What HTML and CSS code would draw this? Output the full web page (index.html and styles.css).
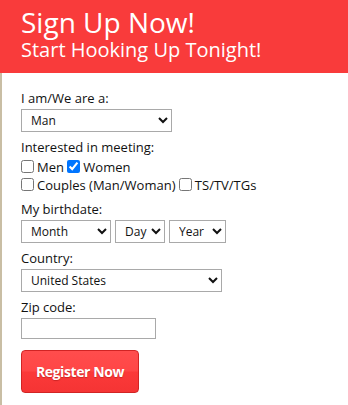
FILE: index.html
```html
<!DOCTYPE html>
<html>
<head>
<meta charset="utf-8">
<link rel="stylesheet" href="styles.css">
</head>
<body>
<header class="hero">
  <h1 class="hero-title">Sign Up Now!</h1>
  <h2 class="hero-sub">Start Hooking Up Tonight!</h2>
</header>
<form class="signup">
  <div class="field">
    <label class="field-label">I am/We are a:</label>
    <select class="sel sel-gender"><option>Man</option></select>
  </div>
  <div class="field">
    <label class="field-label">Interested in meeting:</label>
    <div class="check-row"><label><input type="checkbox" class="chk">Men</label> <label><input type="checkbox" class="chk" checked>Women</label></div>
    <div class="check-row"><label><input type="checkbox" class="chk">Couples (Man/Woman)</label> <label><input type="checkbox" class="chk">TS/TV/TGs</label></div>
  </div>
  <div class="field">
    <label class="field-label">My birthdate:</label>
    <div class="date-row">
      <select class="sel sel-month"><option>Month</option></select>
      <select class="sel sel-day"><option>Day</option></select>
      <select class="sel sel-year"><option>Year</option></select>
    </div>
  </div>
  <div class="field">
    <label class="field-label">Country:</label>
    <select class="sel sel-country"><option>United States</option></select>
  </div>
  <div class="field">
    <label class="field-label">Zip code:</label>
    <input type="text" class="zip">
  </div>
  <button type="button" class="register">Register Now</button>
</form>
</body>
</html>
```
FILE: styles.css
```css
html, body {
  margin: 0;
  padding: 0;
  background: #fff;
}
body {
  font-family: "Open Sans", "Noto Sans", sans-serif;
  color: #111;
  width: 348px;
  height: 405px;
  overflow: hidden;
}
.hero {
  background: #f93b3b;
  color: #fff;
  height: 73px;
  padding-left: 21px;
  box-sizing: border-box;
}
.hero-title {
  margin: 0;
  padding-top: 7px;
  font-size: 28px;
  line-height: 30px;
  font-weight: 400;
}
.hero-sub {
  margin: 0;
  font-size: 20px;
  line-height: 26px;
  font-weight: 400;
}
.signup {
  border-left: 2px solid #c9bea4;
  padding: 16px 0 0 19px;
  margin: 0;
  height: 332px;
  box-sizing: border-box;
}
.field {
  margin-bottom: 6px;
}
.field-label {
  display: block;
  font-size: 13px;
  line-height: 18px;
  margin-bottom: 2px;
}
.sel {
  display: block;
  height: 23px;
  border: 1px solid #a9a9a9;
  border-radius: 0;
  background-color: #fff;
  font-family: "Open Sans", "Noto Sans", sans-serif;
  font-size: 12px;
  color: #111;
  padding: 0 0 0 5px;
  margin: 0;
  box-sizing: border-box;
}
.sel-gender { width: 151px; }
.sel-month { width: 90px; }
.sel-day { width: 50px; }
.sel-year { width: 57px; }
.sel-country { width: 201px; }
.date-row {
  display: flex;
  gap: 4px;
}
.check-row {
  font-size: 13px;
  line-height: 18px;
}
.chk {
  margin: 0 3px 0 0;
  width: 13px;
  height: 13px;
  vertical-align: -1px;
}
.zip {
  display: block;
  width: 135px;
  height: 21px;
  border: 1px solid #a9a9a9;
  border-radius: 0;
  box-sizing: border-box;
  margin: 0;
  padding: 0 4px;
  font-family: "Open Sans", "Noto Sans", sans-serif;
}
.register {
  display: block;
  margin-top: 11px;
  width: 118px;
  height: 43px;
  border: 1px solid #d12424;
  border-radius: 4px;
  background: linear-gradient(to bottom, #ff4d4d 0%, #ff4646 48%, #fb3939 52%, #f53434 100%);
  color: #fff;
  font-family: "Open Sans", "Noto Sans", sans-serif;
  font-weight: 700;
  font-size: 14px;
  letter-spacing: -0.4px;
  text-shadow: 0 1px 1px rgba(120, 0, 0, 0.35);
  padding: 0;
}
```
